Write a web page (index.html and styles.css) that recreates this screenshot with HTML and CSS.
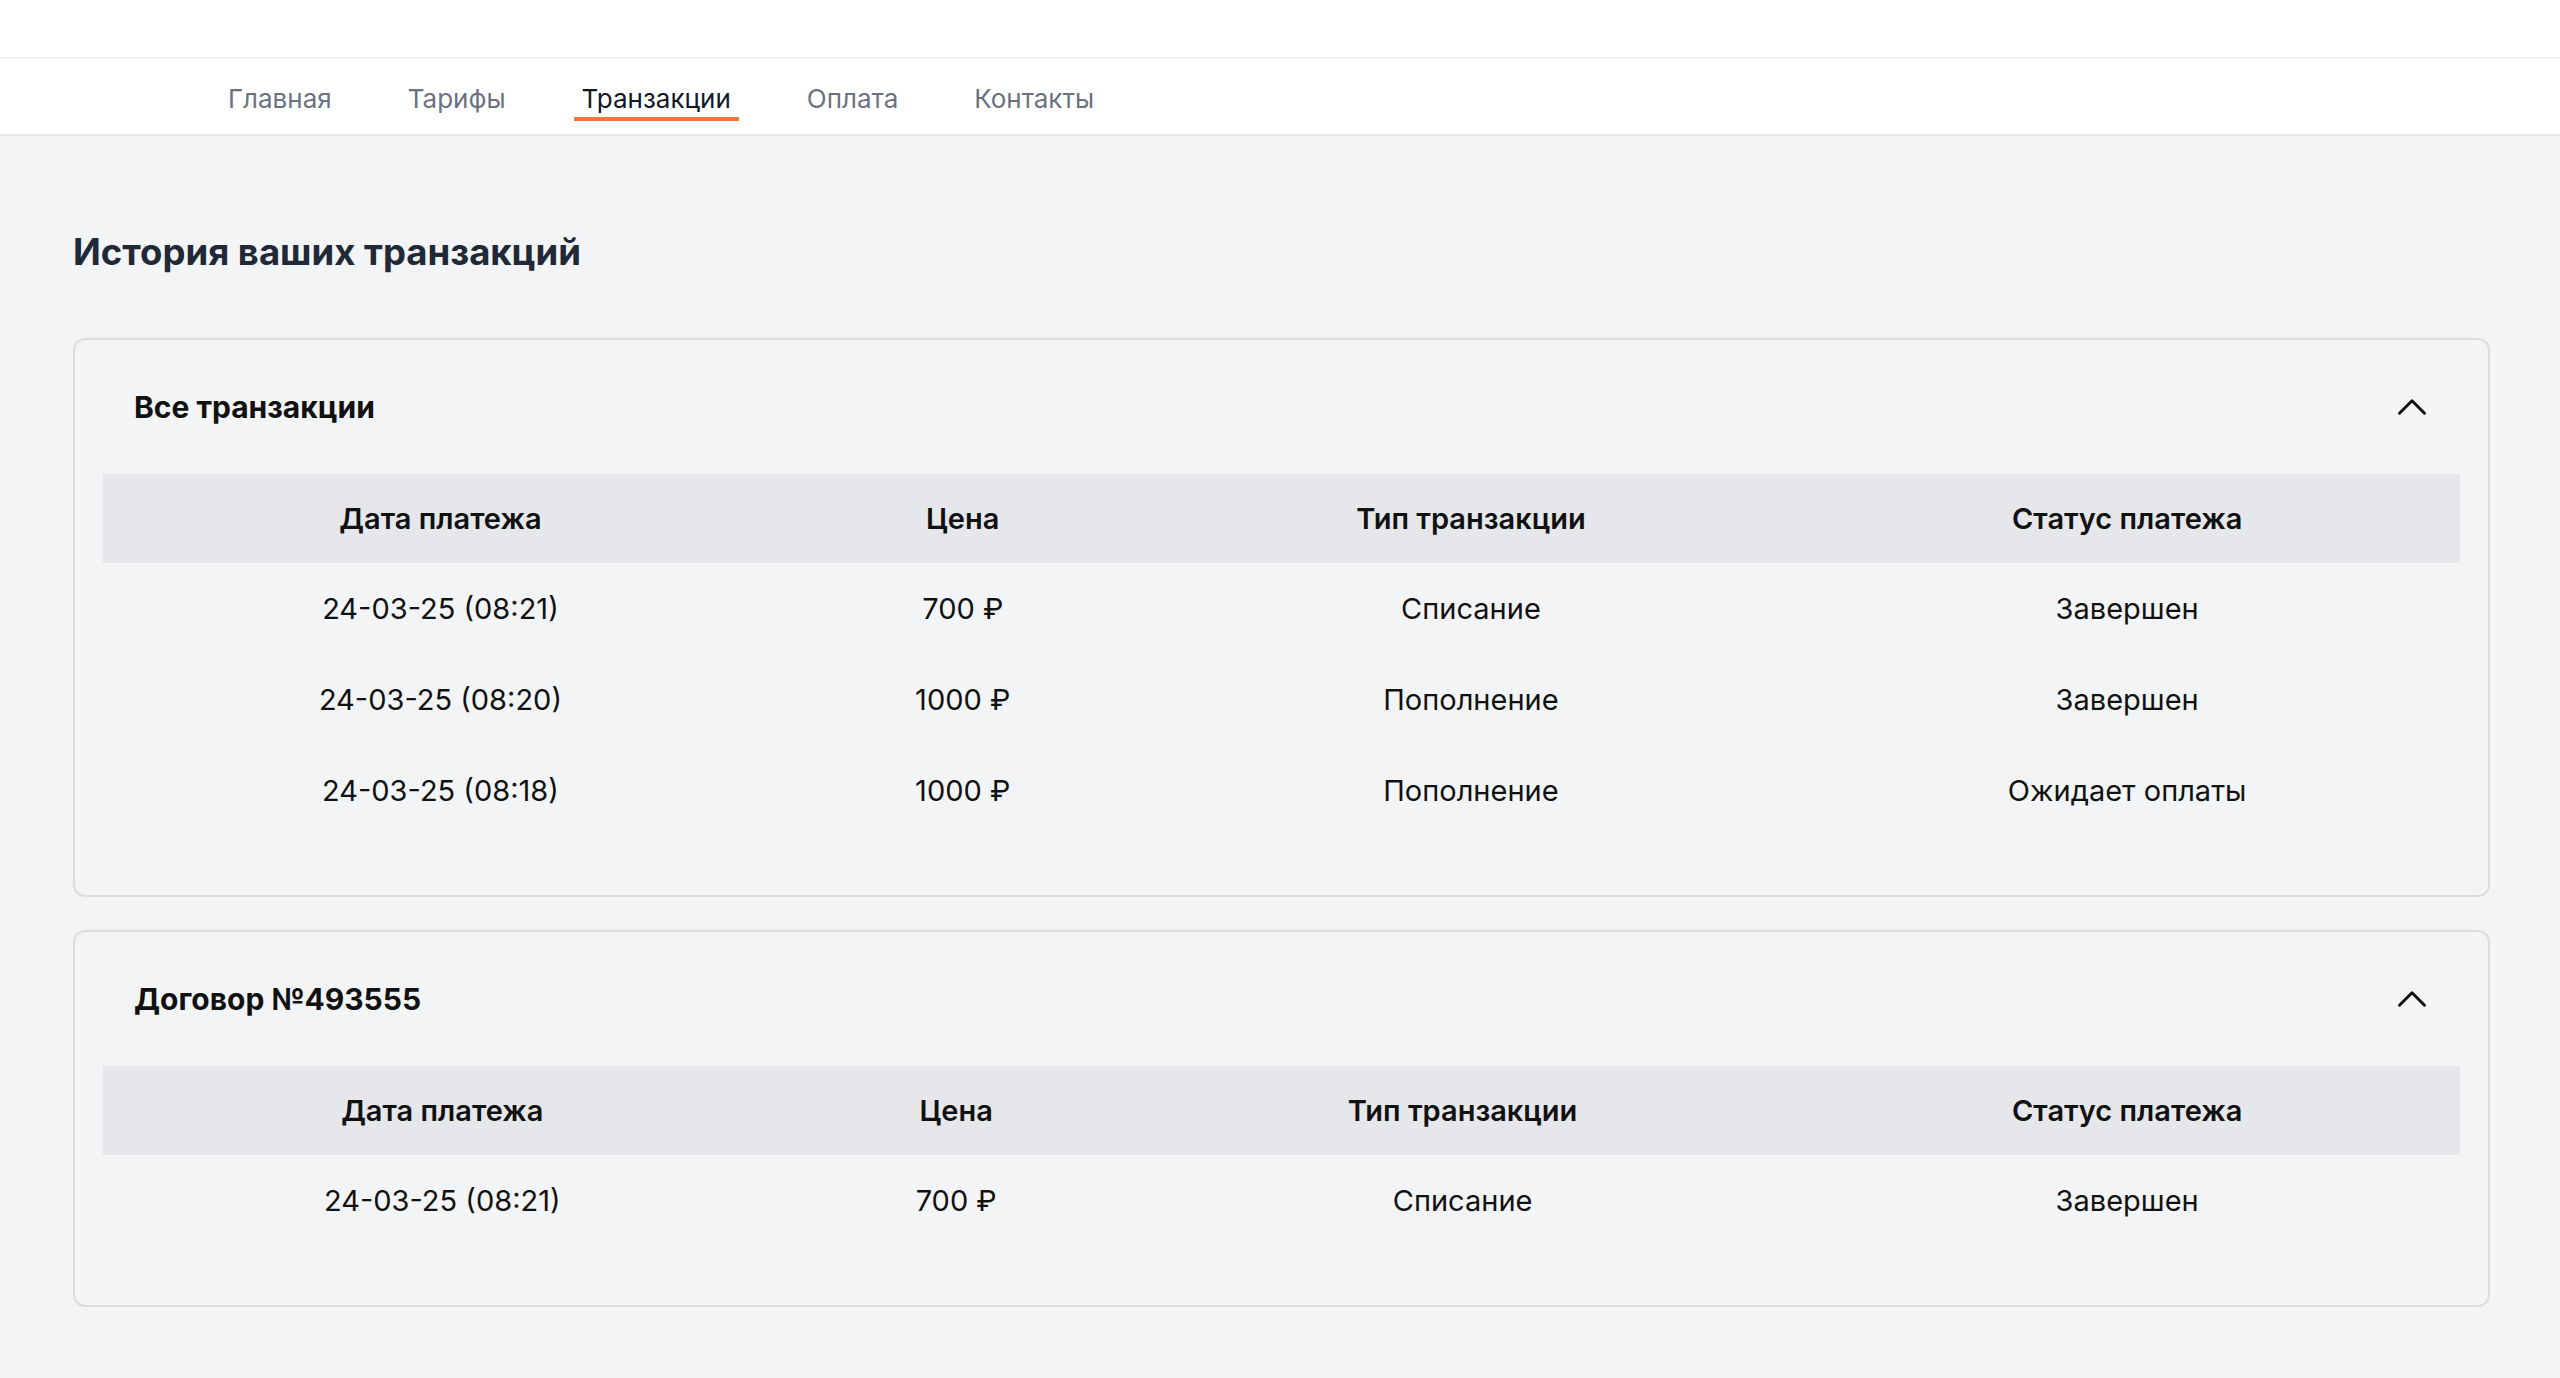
FILE: index.html
```html
<!DOCTYPE html>
<html lang="ru">
<head>
<meta charset="utf-8">
<title>История транзакций</title>
<link rel="stylesheet" href="styles.css">
</head>
<body>
<header class="topbar"></header>
<nav class="nav">
  <a class="nav-link" href="#">Главная</a>
  <a class="nav-link" href="#">Тарифы</a>
  <a class="nav-link active" href="#">Транзакции</a>
  <a class="nav-link" href="#">Оплата</a>
  <a class="nav-link" href="#">Контакты</a>
</nav>
<main class="main">
  <h1 class="page-title">История ваших транзакций</h1>

  <section class="card">
    <div class="card-head">
      <h2 class="card-title">Все транзакции</h2>
      <svg class="chevron" viewBox="0 0 24 24" fill="none" stroke="currentColor" stroke-width="1.8"><path stroke-linecap="round" stroke-linejoin="round" d="M4.5 15.75l7.5-7.5 7.5 7.5"/></svg>
    </div>
    <div class="table-wrap">
      <table class="tx-table">
        <thead>
          <tr><th>Дата платежа</th><th>Цена</th><th>Тип транзакции</th><th>Статус платежа</th></tr>
        </thead>
        <tbody>
          <tr><td>24-03-25 (08:21)</td><td>700 ₽</td><td>Списание</td><td>Завершен</td></tr>
          <tr><td>24-03-25 (08:20)</td><td>1000 ₽</td><td>Пополнение</td><td>Завершен</td></tr>
          <tr><td>24-03-25 (08:18)</td><td>1000 ₽</td><td>Пополнение</td><td>Ожидает оплаты</td></tr>
        </tbody>
      </table>
    </div>
  </section>

  <section class="card">
    <div class="card-head">
      <h2 class="card-title">Договор №493555</h2>
      <svg class="chevron" viewBox="0 0 24 24" fill="none" stroke="currentColor" stroke-width="1.8"><path stroke-linecap="round" stroke-linejoin="round" d="M4.5 15.75l7.5-7.5 7.5 7.5"/></svg>
    </div>
    <div class="table-wrap">
      <table class="tx-table">
        <thead>
          <tr><th>Дата платежа</th><th>Цена</th><th>Тип транзакции</th><th>Статус платежа</th></tr>
        </thead>
        <tbody>
          <tr><td>24-03-25 (08:21)</td><td>700 ₽</td><td>Списание</td><td>Завершен</td></tr>
        </tbody>
      </table>
    </div>
  </section>
</main>
</body>
</html>
```
FILE: styles.css
```css
* { box-sizing: border-box; }
html, body {
  margin: 0;
  padding: 0;
}
body {
  background: #f3f4f6;
  font-family: Inter, "Noto Sans", "Liberation Sans", sans-serif;
  color: #111111;
  min-height: 1378px;
}
.topbar {
  height: 59px;
  background: #ffffff;
  border-bottom: 2px solid #f1f1f3;
}
.nav {
  height: 77px;
  background: #ffffff;
  border-bottom: 2px solid #e5e7eb;
  display: flex;
  align-items: flex-start;
  padding-left: 220px;
  gap: 60px;
}
.nav-link {
  display: block;
  padding: 22px 8px 0;
  font-size: 26px;
  line-height: 36px;
  color: #6b7280;
  text-decoration: none;
  border-bottom: 4px solid transparent;
}
.nav-link.active {
  color: #111827;
  border-bottom-color: #ea7b35;
}
.main {
  padding: 95px 70px 40px 73px;
}
.page-title {
  margin: 0 0 65px;
  font-size: 36.5px;
  line-height: 42px;
  font-weight: 700;
  color: #1f2937;
}
.card {
  border: 2px solid #dadce0;
  border-radius: 12px;
  padding: 28px 28px 59px;
  margin-bottom: 33px;
}
.card-head {
  height: 78px;
  margin-bottom: 28px;
  display: flex;
  align-items: center;
  justify-content: space-between;
  padding: 0 28px 0 31px;
}
.card-title {
  margin: 0;
  font-size: 30px;
  line-height: 34px;
  font-weight: 700;
  color: #111111;
}
.chevron {
  width: 40px;
  height: 40px;
  color: #111111;
}
.table-wrap {
  border-radius: 0 0 6px 6px;
}
.tx-table {
  width: 100%;
  border-collapse: collapse;
  font-size: 29px;
}
.tx-table th {
  background: #e5e7eb;
  height: 89px;
  padding: 0 42px;
  font-weight: 600;
  text-align: center;
  color: #111111;
}
.tx-table td {
  height: 91px;
  padding: 0 42px;
  text-align: center;
  font-weight: 400;
  color: #111111;
}
```
